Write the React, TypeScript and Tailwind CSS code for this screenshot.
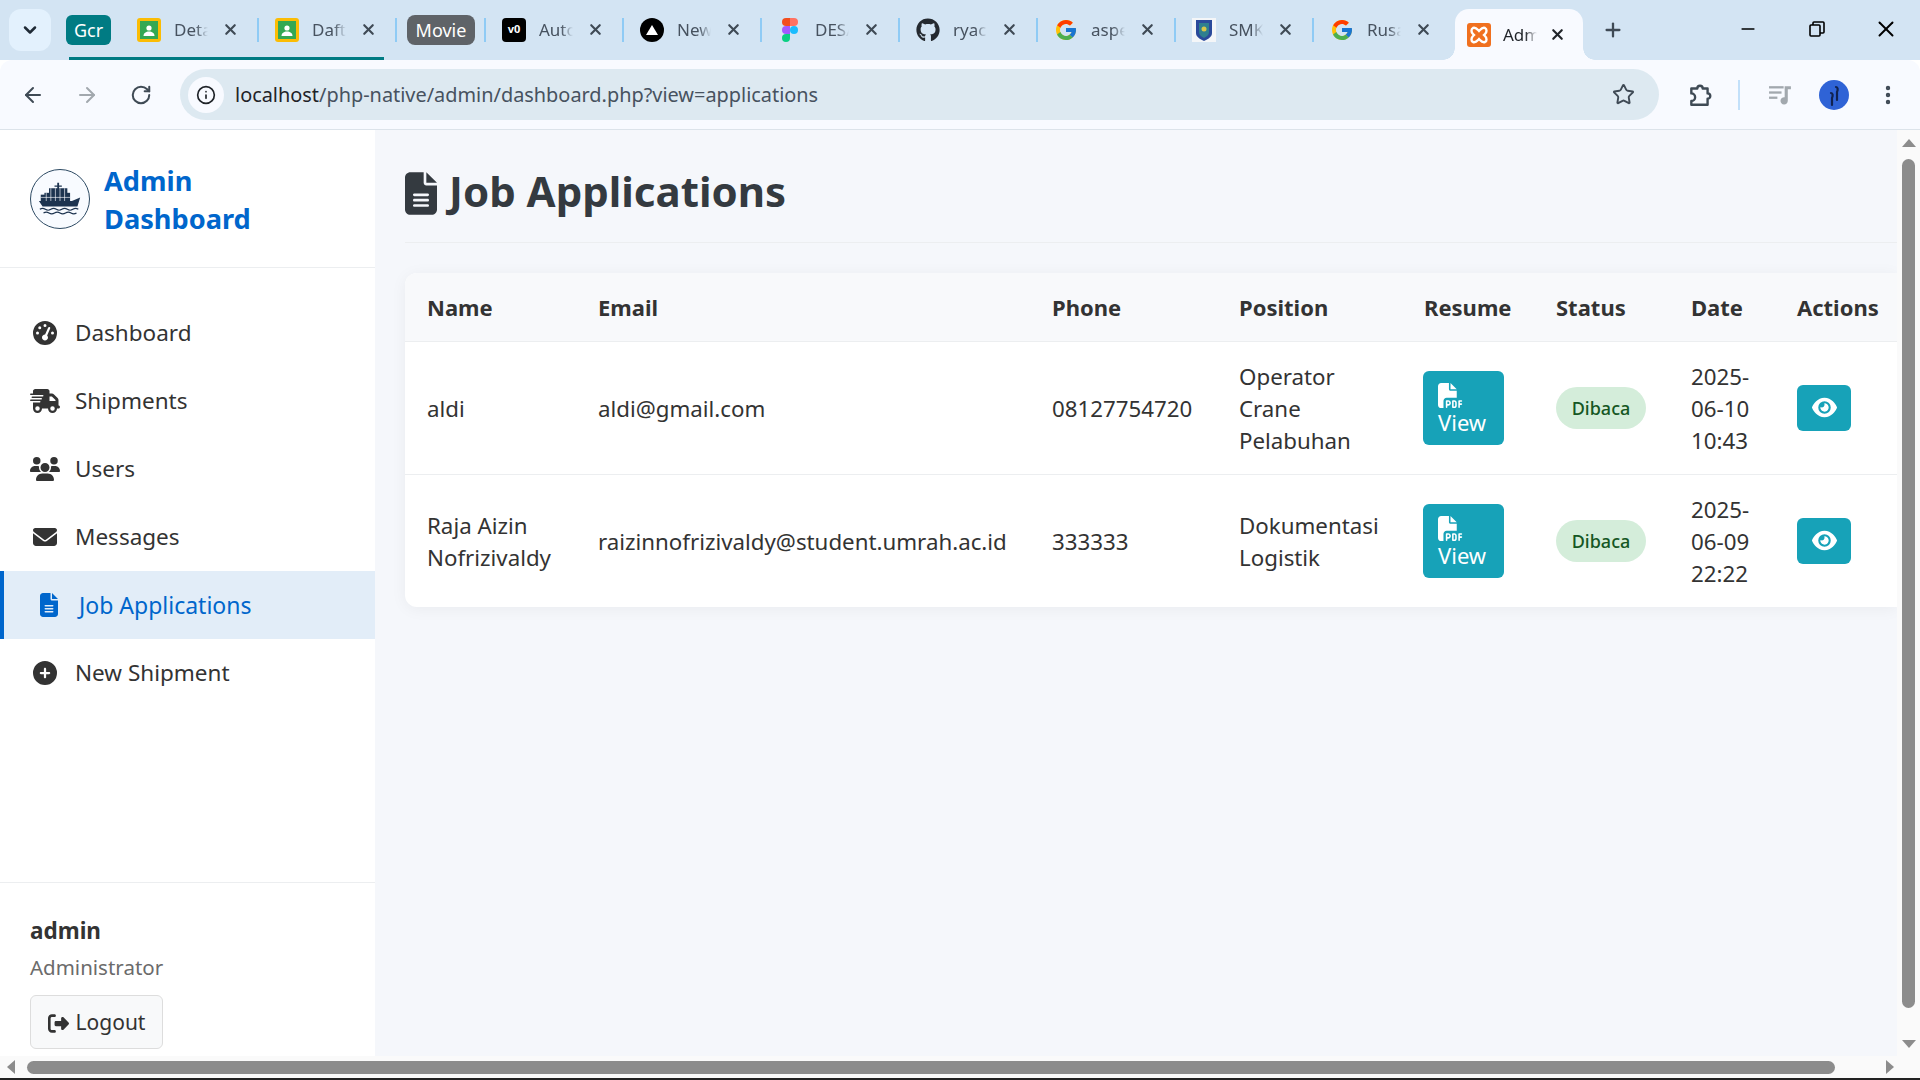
import { ArrowLeft, ArrowRight, ChevronDown, EllipsisVertical, Info, Minus, Plus, RotateCw, Star, X } from "lucide-react";
import { ReactNode } from "react";
import { FaCirclePlus, FaEnvelope, FaEye, FaFileLines, FaFilePdf, FaGaugeHigh, FaGithub, FaRightFromBracket, FaTruckFast, FaUsers } from "react-icons/fa6";
import { FcGoogle } from "react-icons/fc";

const font = "font-['Noto_Sans',sans-serif]";

function ClassroomIcon() {
  return (
    <svg viewBox="0 0 24 24" className="h-6 w-6">
      <rect x="0" y="0" width="24" height="24" rx="3" fill="#fbbc04" />
      <rect x="3" y="3" width="18" height="18" fill="#34a853" />
      <circle cx="12" cy="10" r="2.6" fill="#fff" />
      <path d="M6.5 18c0-3 2.5-4.5 5.5-4.5s5.5 1.500 5.500 4.500z" fill="#fff" />
    </svg>
  );
}

function FigmaIcon() {
  return (
    <svg viewBox="0 0 16 24" className="h-6 w-4">
      <path d="M8 0H4a4 4 0 0 0 0 8h4z" fill="#f24e1e" />
      <path d="M8 0h4a4 4 0 0 1 0 8H8z" fill="#ff7262" />
      <path d="M8 8H4a4 4 0 0 0 0 8h4z" fill="#a259ff" />
      <circle cx="12" cy="12" r="4" fill="#1abcfe" />
      <path d="M8 16H4a4 4 0 1 0 4 4z" fill="#0acf83" />
    </svg>
  );
}

function ShieldIcon() {
  return (
    <svg viewBox="0 0 24 24" className="h-6 w-6">
      <rect width="24" height="24" fill="#f4f6f8" />
      <path d="M4 2h16v13c0 4-4 6-8 8-4-2-8-4-8-8z" fill="#2b4a9b" />
      <path d="M7 5h10v9c0 3-2 4-5 6-3-2-5-3-5-6z" fill="#2f7f8f" />
      <circle cx="12" cy="11" r="2.500" fill="#d9c64a" />
    </svg>
  );
}

function XamppIcon() {
  return (
    <svg viewBox="0 0 24 24" className="h-6 w-6">
      <rect width="24" height="24" rx="3" fill="#f0701f" />
      <path d="M6 5c3-1 4 1 6 3 2-2 3-4 6-3 2 1 2 4 0 6l-1 1 1 1c2 2 2 5 0 6-3 1-4-1-6-3-2 2-3 4-6 3-2-1-2-4 0-6l1-1-1-1C4 9 4 6 6 5z" fill="none" stroke="#fff" strokeWidth="2.400" />
    </svg>
  );
}

function ExtensionIcon() {
  return (
    <svg viewBox="0 0 24 24" className="ml-[28px] h-[26px] w-[26px] text-[#3f4a55]" fill="none" stroke="currentColor" strokeWidth="2.200" strokeLinejoin="round">
      <path d="M4 6h5.500a2.500 2.500 0 0 1 5 0H19v4.500a2.500 2.500 0 0 1 0 5V21H4v-3.500a3.500 3.500 0 0 0 0-7z" />
    </svg>
  );
}

function MediaIcon() {
  return (
    <svg viewBox="0 0 24 24" className="ml-[28px] h-[25px] w-[25px] text-[#a2a8ae]" fill="currentColor">
      <rect x="1" y="4" width="14" height="2.200" />
      <rect x="1" y="9" width="12" height="2.200" />
      <rect x="1" y="14" width="8" height="2.200" />
      <path d="M16 4h6v3h-3v11a3.500 3.500 0 1 1-3-3.400z" />
    </svg>
  );
}

function Avatar() {
  return (
    <svg viewBox="0 0 30 30" className="ml-[26px] h-[30px] w-[30px]">
      <circle cx="15" cy="15" r="15" fill="#2f63d6" />
      <path d="M17 7c2 0 2 3 1 5v8M12 13c2 0 2 3 1 5v7" fill="none" stroke="#10224f" strokeWidth="2.200" strokeLinecap="round" />
    </svg>
  );
}

function Tab({ icon, title, className = "", hideSeparator }: { icon: ReactNode; title: string; className?: string; hideSeparator?: boolean }) {
  return (
    <div className={`mb-[5px] flex h-[51px] w-[138px] shrink-0 items-center pl-4 ${className}`}>
      <div className="flex w-6 justify-center">{icon}</div>
      <span className="ml-[13px] w-[34px] overflow-hidden whitespace-nowrap text-[17px] text-[#47525f] [mask-image:linear-gradient(to_right,black_65%,transparent)]">
        {title}
      </span>
      <X size={17} strokeWidth={3} className="ml-[14px] text-[#3f4a55]" />
      {!hideSeparator && <div className="ml-auto h-[24px] w-[2px] bg-[#8fcbf5]" />}
    </div>
  );
}

function TabStrip() {
  return (
    <div className="flex h-[60px] items-end bg-[#d3e4f3] pl-[9px]">
      <div className="mb-[9px] flex h-[42px] w-[42px] items-center justify-center rounded-[12px] bg-[#e3f1fd]">
        <ChevronDown size={20} strokeWidth={3} className="text-[#1f2a35]" />
      </div>
      <div className="relative ml-[15px] flex h-[60px] items-end">
        <div className="mb-[15px] flex h-[30px] w-[45px] items-center justify-center rounded-[6px] bg-[#007b83] text-[18px] text-white">Gcr</div>
        <Tab title="Detail" icon={<ClassroomIcon />} className="ml-[10px]" />
        <Tab title="Daftar" icon={<ClassroomIcon />} />
        <div className="absolute bottom-0 left-[3px] h-[3px] w-[315px] bg-[#007b83]" />
      </div>
      <div className="mb-[15px] ml-[10px] flex h-[30px] w-[68px] items-center justify-center rounded-[8px] bg-[#5f6368] text-[18px] text-white">Movie</div>
      <div className="mb-[18px] ml-[9px] h-[24px] w-[2px] bg-[#8fcbf5]" />
      <Tab
        title="Auto"
        icon={<div className="flex h-6 w-6 items-center justify-center rounded-[4px] bg-black text-[11px] font-bold text-white">v0</div>}
      />
      <Tab
        title="New"
        icon={
          <div className="flex h-6 w-6 items-center justify-center rounded-full bg-black">
            <div className="h-0 w-0 border-x-[6px] border-b-[10px] border-x-transparent border-b-white" />
          </div>
        }
      />
      <Tab title="DESAIN" icon={<FigmaIcon />} />
      <Tab title="ryacode" icon={<FaGithub size={24} className="text-[#24292f]" />} />
      <Tab title="aspek" icon={<FcGoogle size={24} />} />
      <Tab title="SMK" icon={<ShieldIcon />} />
      <Tab title="Rusak" icon={<FcGoogle size={24} />} hideSeparator />
      <div className="relative ml-[3px] flex h-[51px] w-[128px] items-center rounded-t-[14px] bg-[#f8faff] pl-3">
        <div className="absolute bottom-0 -left-3 h-3 w-3 bg-[radial-gradient(circle_at_0_0,transparent_11.5px,#f8faff_12px)]" />
        <div className="absolute bottom-0 -right-3 h-3 w-3 bg-[radial-gradient(circle_at_100%_0,transparent_11.5px,#f8faff_12px)]" />
        <XamppIcon />
        <span className="ml-3 w-[34px] overflow-hidden whitespace-nowrap text-[17px] text-[#1f2328] [mask-image:linear-gradient(to_right,black_65%,transparent)]">Admin</span>
        <X size={17} strokeWidth={3} className="ml-[12px] text-[#1f2328]" />
      </div>
      <Plus size={22} strokeWidth={2.500} className="mb-[19px] ml-[19px] text-[#3f4a55]" />
      <div className="ml-auto mb-[18px] flex text-black">
        <div className="flex w-[69px] items-center justify-center"><Minus size={20} strokeWidth={2} /></div>
        <div className="flex w-[69px] items-center justify-center">
          <svg viewBox="0 0 16 16" className="h-4 w-4" fill="none" stroke="currentColor" strokeWidth="1.600">
            <rect x="1" y="4" width="10" height="11" rx="1" />
            <path d="M4 4V2a1 1 0 0 1 1-1h9a1 1 0 0 1 1 1v9a1 1 0 0 1-1 1h-3" />
          </svg>
        </div>
        <div className="flex w-[69px] items-center justify-center"><X size={26} strokeWidth={1.800} /></div>
      </div>
    </div>
  );
}

function Toolbar() {
  return (
    <div className="flex h-[70px] items-center rounded-t-[12px] border-b border-[#dce3ea] bg-[#f8faff]">
      <ArrowLeft size={24} strokeWidth={2} className="ml-[21px] text-[#3f4a55]" />
      <ArrowRight size={24} strokeWidth={2} className="ml-[30px] text-[#a2a8ae]" />
      <RotateCw size={22} strokeWidth={2.200} className="ml-[31px] text-[#3f4a55]" />
      <div className="ml-[28px] flex h-[51px] w-[1479px] items-center rounded-full bg-[#dde9f1] pl-[8px]">
        <div className="flex h-[36px] w-[36px] items-center justify-center rounded-full bg-[#f8faff]">
          <Info size={20} strokeWidth={2} className="text-[#1f2328]" />
        </div>
        <span className="ml-[11px] text-[19.9px] text-[#47525f]">
          <span className="text-[#1f2328]">localhost</span>/php-native/admin/dashboard.php?view=applications
        </span>
        <Star size={23} strokeWidth={2} className="ml-auto mr-[24px] text-[#3f4a55]" />
      </div>
      <ExtensionIcon />
      <div className="ml-[25px] h-[30px] w-[2px] bg-[#c2e0fa]" />
      <MediaIcon />
      <Avatar />
      <EllipsisVertical size={24} strokeWidth={2.400} className="ml-[27px] text-[#3f4a55]" />
    </div>
  );
}

function ShipLogo() {
  return (
    <div className="flex h-[60px] w-[60px] shrink-0 items-center justify-center rounded-full border border-[#2d4a63] bg-[#f8fbff]">
      <svg viewBox="0 0 48 40" className="w-[44px]">
        <path d="M21 3h2v3h3v1.500h-3V10h-2V7.500h-3V6h3z" fill="#1d3450" />
        <rect x="12" y="9" width="20" height="6" fill="#1d3450" />
        <rect x="7" y="14" width="28" height="9" fill="#1d3450" />
        <rect x="3" y="16" width="8" height="7" fill="#1d3450" />
        <path d="M9 14v9M14 9v14M19 9v14M24 9v14M29 9v14M3 19h32" stroke="#f8fbff" strokeWidth="0.700" />
        <path d="M1 23h36l9-4-3 10H5z" fill="#1d3450" />
        <path d="M2 32q3-2 6 0t6 0 6 0 6 0 6 0 6 0 6 0M6 36q3-2 6 0t6 0 6 0 6 0 6 0 6 0" fill="none" stroke="#1d3450" strokeWidth="1.300" />
      </svg>
    </div>
  );
}

const navItems = [
  { label: "Dashboard", icon: <FaGaugeHigh size={24} /> },
  { label: "Shipments", icon: <FaTruckFast size={30} /> },
  { label: "Users", icon: <FaUsers size={30} /> },
  { label: "Messages", icon: <FaEnvelope size={24} /> },
  { label: "Job Applications", icon: <FaFileLines size={24} />, active: true },
  { label: "New Shipment", icon: <FaCirclePlus size={24} /> },
];

function Sidebar() {
  return (
    <aside className="flex w-[375px] shrink-0 flex-col bg-white">
      <div className="flex h-[138px] items-center gap-[14px] border-b border-[#eceef0] pl-[30px]">
        <ShipLogo />
        <div className="pt-[2px] text-[27.200px] font-bold leading-[38px] text-[#0066cc]">
          Admin
          <br />
          Dashboard
        </div>
      </div>
      <nav className="flex-1 pt-[31px]">
        {navItems.map((item) => (
          <div
            key={item.label}
            className={`flex h-[68px] items-center ${
              item.active ? "border-l-4 border-[#0066cc] bg-[#e2edf8] pl-[30px] text-[23px] text-[#0066cc]" : "pl-[30px] text-[22.500px] text-[#333]"
            }`}
          >
            <div className="flex w-[30px] justify-center">{item.icon}</div>
            <span className="ml-[15px]">{item.label}</span>
          </div>
        ))}
      </nav>
      <div className="h-[174px] border-t border-[#eceef0] px-[30px] pt-[30px]">
        <div className="text-[22.500px] font-bold leading-[36px] text-[#333]">admin</div>
        <div className="text-[20.500px] leading-[36px] text-[#6b6b6b]">Administrator</div>
        <div className="mt-[10px] flex h-[54px] w-[133px] items-center justify-center gap-[7px] rounded-[6px] border border-[#dddddd] bg-[#f8f9fa] pt-[2px] text-[21px] text-[#333]">
          <FaRightFromBracket size={21} />
          Logout
        </div>
      </div>
    </aside>
  );
}

const applications = [
  { name: "aldi", email: "aldi@gmail.com", phone: "08127754720", position: "Operator Crane Pelabuhan", date: "2025-06-10 10:43" },
  { name: "Raja Aizin Nofrizivaldy", email: "raizinnofrizivaldy@student.umrah.ac.id", phone: "333333", position: "Dokumentasi Logistik", date: "2025-06-09 22:22" },
];

const columns = ["Name", "Email", "Phone", "Position", "Resume", "Status", "Date", "Actions"];

function ApplicationsTable() {
  return (
    <div className="overflow-hidden rounded-l-[12px] bg-white shadow-[0_2px_16px_rgba(0,0,0,0.05)]">
      <table className="w-full table-fixed border-collapse text-left text-[22.300px] text-[#333]">
        <colgroup>
          <col className="w-[170px]" />
          <col className="w-[454px]" />
          <col className="w-[187px]" />
          <col className="w-[185px]" />
          <col className="w-[132px]" />
          <col className="w-[135px]" />
          <col className="w-[106px]" />
          <col />
        </colgroup>
        <thead>
          <tr className="h-[68px] border-b border-[#eceef0] bg-[#f8f9fb]">
            {columns.map((col) => (
              <th key={col} className="pl-[23px] pt-[2px] text-[22px] font-bold first:pl-[22px]">
                {col}
              </th>
            ))}
          </tr>
        </thead>
        <tbody>
          {applications.map((app) => (
            <tr key={app.email} className="h-[133px] border-b border-[#eceef0] leading-[32px] last:border-0">
              <td className="pl-[22px] pr-2 pt-[2px]">{app.name}</td>
              <td className="pl-[23px] pt-[2px] whitespace-nowrap">{app.email}</td>
              <td className="pl-[23px] pt-[2px]">{app.phone}</td>
              <td className="pl-[23px] pr-2 pt-[2px]">{app.position}</td>
              <td className="pl-[22px]">
                <div className="flex h-[74px] w-[81px] flex-col justify-start rounded-[6px] bg-[#17a2b8] pl-[15px] pt-[12px] text-[22px] leading-[28px] text-white">
                  <FaFilePdf size={25} />
                  View
                </div>
              </td>
              <td className="pl-[23px]">
                <span className="inline-flex h-[42px] w-[90px] items-center justify-center rounded-full bg-[#d4edda] text-[18px] font-medium text-[#155724]">
                  Dibaca
                </span>
              </td>
              <td className="pl-[23px] pr-4 pt-[2px]">{app.date}</td>
              <td className="pl-[23px]">
                <div className="flex h-[46px] w-[54px] items-center justify-center rounded-[6px] bg-[#17a2b8] text-white">
                  <FaEye size={25} />
                </div>
              </td>
            </tr>
          ))}
        </tbody>
      </table>
    </div>
  );
}

function VerticalScrollbar() {
  return (
    <div className="flex w-[23px] shrink-0 flex-col items-center bg-[#fafafa] pt-[9px]">
      <div className="h-0 w-0 border-x-[7px] border-b-[8px] border-x-transparent border-b-[#8c8c8c]" />
      <div className="mt-[12px] h-[849px] w-[13px] rounded-full bg-[#8c8c8c]" />
      <div className="mt-[32px] h-0 w-0 border-x-[7px] border-t-[8px] border-x-transparent border-t-[#8c8c8c]" />
    </div>
  );
}

function HorizontalScrollbar() {
  return (
    <div className="flex h-[22px] items-center bg-[#fafafa] pl-[7px]">
      <div className="h-0 w-0 border-y-[7px] border-r-[8px] border-y-transparent border-r-[#8c8c8c]" />
      <div className="ml-[12px] h-[13px] w-[1808px] rounded-full bg-[#8c8c8c]" />
      <div className="ml-[51px] h-0 w-0 border-y-[7px] border-l-[8px] border-y-transparent border-l-[#8c8c8c]" />
    </div>
  );
}

export default function App() {
  return (
    <div className={`flex h-[1080px] w-[1920px] flex-col overflow-hidden ${font}`}>
      <TabStrip />
      <Toolbar />
      <div className="flex h-[926px] min-h-0">
        <Sidebar />
        <main className="min-w-0 flex-1 bg-[#f5f7fb] pl-[30px]">
          <div className="mb-[30px] flex h-[113px] items-center gap-3 border-b border-[#eceef0] pt-[14px] text-[#343a40]">
            <FaFileLines className="h-[43px] w-[32px] shrink-0" />
            <h1 className="pb-[5px] text-[42px] font-bold">Job Applications</h1>
          </div>
          <ApplicationsTable />
        </main>
        <VerticalScrollbar />
      </div>
      <HorizontalScrollbar />
      <div className="h-[2px] bg-[#222]" />
    </div>
  );
}
